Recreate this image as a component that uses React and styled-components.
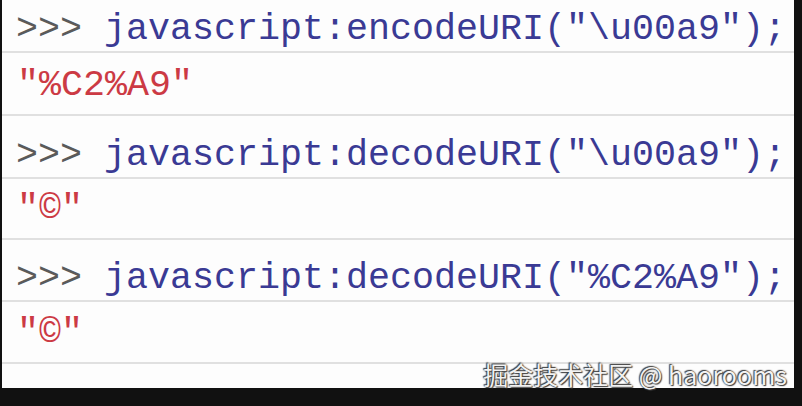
import React from "react";
import styled, { createGlobalStyle } from "styled-components";

const Global = createGlobalStyle`
  html, body { margin: 0; padding: 0; background: #111; }
  body { width: 802px; height: 406px; overflow: hidden; }
`;

const Frame = styled.div`
  position: relative;
  width: 802px;
  height: 406px;
  background: #111;
`;

const Panel = styled.div`
  margin-left: 2px;
  width: 792px;
  height: 388px;
  background: #fdfdfd;
  overflow: hidden;
  display: flex;
  flex-direction: column;
`;

const Row = styled.div`
  height: ${(p) => p.$h}px;
  box-sizing: border-box;
  flex: none;
  display: flex;
  align-items: flex-end;
  padding-left: ${(p) => (p.$result ? 15 : 14)}px;
  padding-bottom: ${(p) => (p.$result ? 9 : 2)}px;
  border-bottom: 2px solid #e0e0e0;
  font-family: "Liberation Mono", "Courier New", monospace;
  font-size: 36.67px;
  line-height: 40px;
  white-space: pre;
  color: ${(p) => (p.$result ? "#cc3a44" : "#3a3a94")};
`;

const Blank = styled.div`
  flex: 1;
`;

const Prompt = styled.span`
  color: #5a5a5a;
`;

const Watermark = styled.div`
  position: absolute;
  right: 15px;
  top: 360px;
  font-family: "Noto Sans CJK SC", "Noto Sans", sans-serif;
  font-size: 25px;
  line-height: 29px;
  color: #f2f2f2;
  text-shadow: 0 0 2px #333, 1px 1px 1px #444, -1px -1px 1px #444;
  white-space: pre;
`;

const lines = [
  { cmd: 'javascript:encodeURI("\\u00a9");', out: '"%C2%A9"', h: [53, 63] },
  { cmd: 'javascript:decodeURI("\\u00a9");', out: '"©"', h: [63, 61] },
  { cmd: 'javascript:decodeURI("%C2%A9");', out: '"©"', h: [62, 62] },
];

export default function App() {
  return (
    <Frame>
      <Global />
      <Panel>
        {lines.map((l, i) => (
          <React.Fragment key={i}>
            <Row $h={l.h[0]}>
              <Prompt>{">>> "}</Prompt>
              {l.cmd}
            </Row>
            <Row $h={l.h[1]} $result>
              {l.out}
            </Row>
          </React.Fragment>
        ))}
        <Blank />
      </Panel>
      <Watermark>掘金技术社区 @ haorooms</Watermark>
    </Frame>
  );
}
